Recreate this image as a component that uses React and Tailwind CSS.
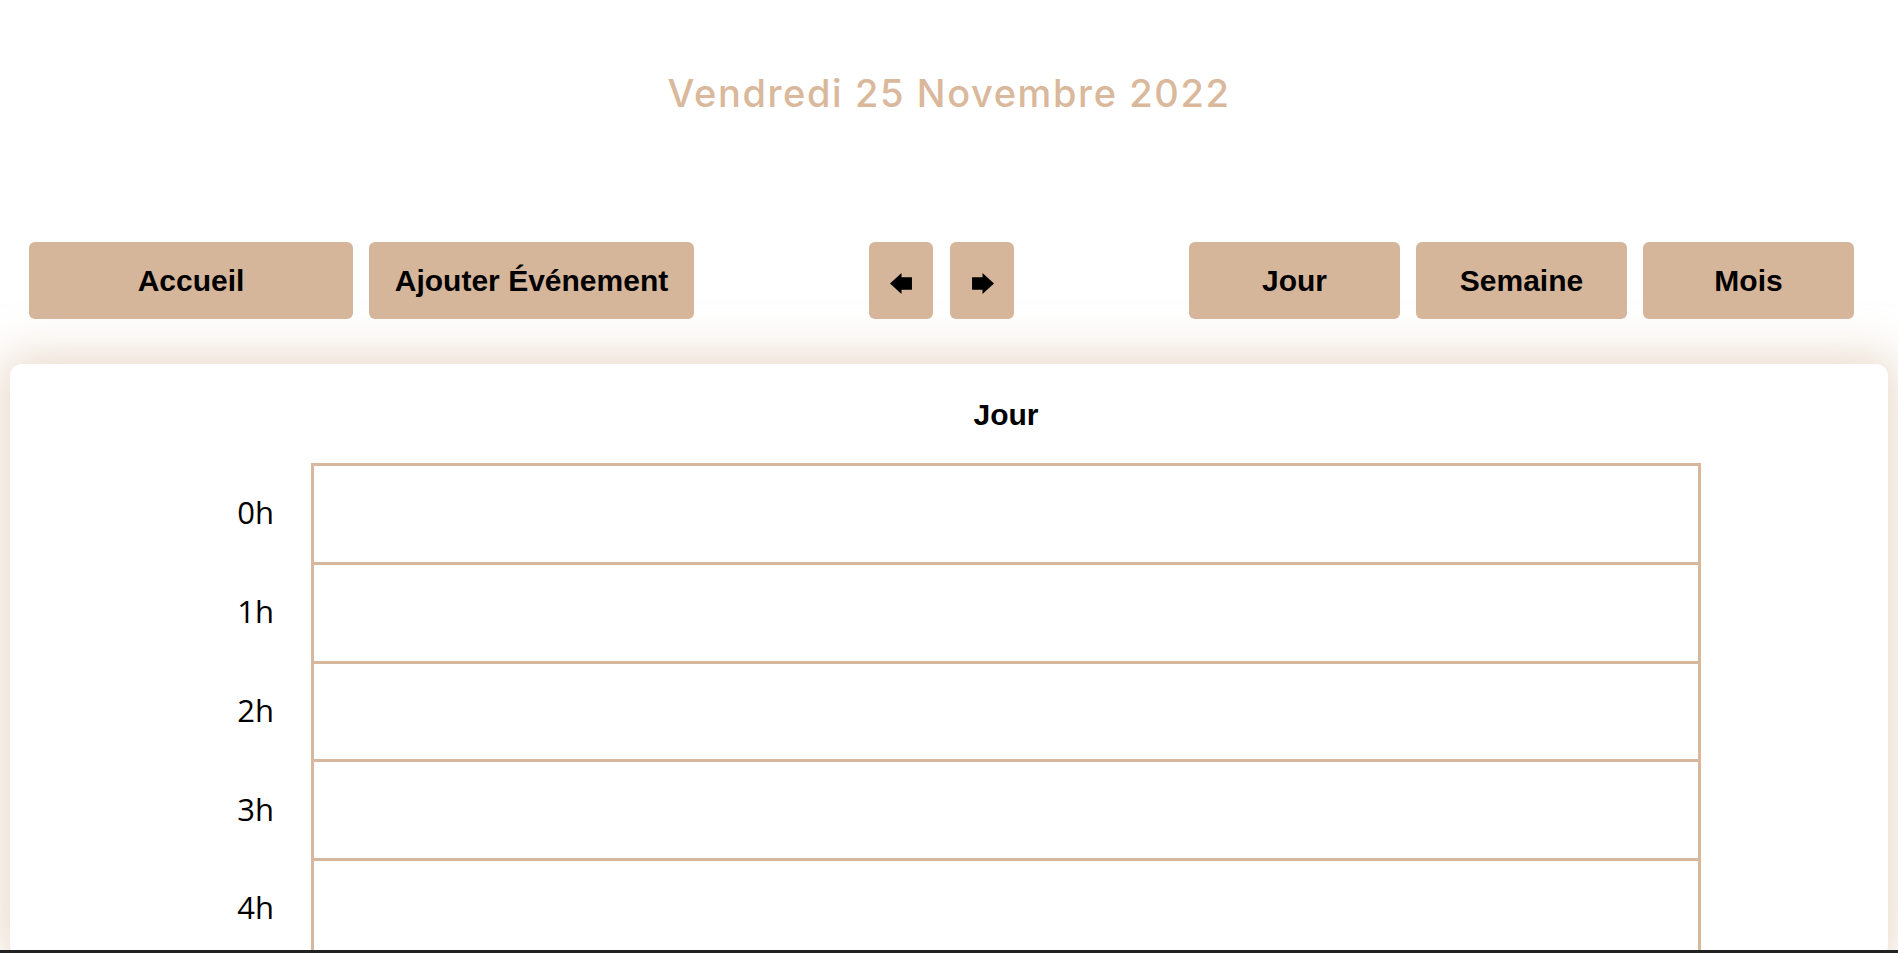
import React from "react";

const hours = ["0h", "1h", "2h", "3h", "4h"];

const NavButton = ({ children, className = "" }) => (
  <button
    className={`h-[77px] rounded-[6px] bg-[#d6b69b] text-[30px] font-bold text-black flex items-center justify-center ${className}`}
    style={{ fontFamily: '"Liberation Sans", Arial, sans-serif' }}
  >
    {children}
  </button>
);

const ArrowLeft = () => (
  <svg width="23" height="21" viewBox="0 0 22 20" className="mt-[5px]">
    <polygon points="0,10 11,0 11,4 21,4 21,16 11,16 11,20" fill="#000" />
  </svg>
);

const ArrowRight = () => (
  <svg width="23" height="21" viewBox="0 0 22 20" className="mt-[5px]">
    <polygon points="22,10 11,0 11,4 1,4 1,16 11,16 11,20" fill="#000" />
  </svg>
);

const App = () => {
  return (
    <div className="h-screen flex flex-col overflow-hidden bg-white">
      <div className="flex-1 overflow-hidden">
        <h1
          className="pt-[71px] text-center text-[38px] leading-[44px] font-medium tracking-[1.6px] text-[#d9b89b]"
          style={{ fontFamily: 'Inter, "Noto Sans", sans-serif' }}
        >
          Vendredi 25 Novembre 2022
        </h1>

        <nav className="mt-[127px] flex justify-between pl-[29px] pr-[44px]">
          <div className="flex gap-[16px]">
            <NavButton className="w-[324px]">Accueil</NavButton>
            <NavButton className="w-[325px]">Ajouter Événement</NavButton>
          </div>
          <div className="flex gap-[17px]">
            <NavButton className="w-[64px]">
              <ArrowLeft />
            </NavButton>
            <NavButton className="w-[64px]">
              <ArrowRight />
            </NavButton>
          </div>
          <div className="flex gap-[16px]">
            <NavButton className="w-[211px]">Jour</NavButton>
            <NavButton className="w-[211px]">Semaine</NavButton>
            <NavButton className="w-[211px]">Mois</NavButton>
          </div>
        </nav>

        <section className="mx-[10px] mt-[45px] rounded-[12px] bg-white pt-[33px] shadow-[0_0_45px_10px_rgba(222,196,172,0.6)]">
          <div className="grid grid-cols-[301px_1390px]">
            <div />
            <h2
              className="text-center text-[30px] leading-[36px] font-bold text-black"
              style={{ fontFamily: '"Liberation Sans", Arial, sans-serif' }}
            >
              Jour
            </h2>
          </div>

          <div className="mt-[30px] grid grid-cols-[301px_1390px]">
            {hours.map((h) => (
              <React.Fragment key={h}>
                <div
                  className="h-[98.8px] flex items-center justify-end pr-[37px] text-[31px] font-medium text-black"
                  style={{ fontFamily: '"Open Sans", "Noto Sans", sans-serif' }}
                >
                  {h}
                </div>
                <div className="h-[98.8px] border-x-[3px] border-t-[3px] border-[#d8b89c]" />
              </React.Fragment>
            ))}
          </div>
        </section>
      </div>
      <div className="h-[3px] bg-[#222222]" />
    </div>
  );
};

export default App;
